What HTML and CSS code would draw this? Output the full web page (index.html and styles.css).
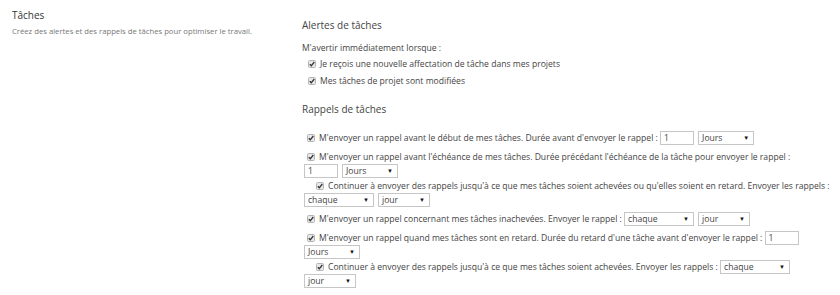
FILE: index.html
```html
<!DOCTYPE html>
<html>
<head>
    <meta charset="utf-8" />
    <title>Tâches</title>
    <link rel="stylesheet" href="styles.css">
</head>
<body>
    <div class="page">
        <div class="side">
            <div class="side-title">Tâches</div>
            <div class="side-desc">Créez des alertes et des rappels de tâches pour optimiser le travail.</div>
        </div>

        <div class="main">
            <h3 class="section-title">Alertes de tâches</h3>
            <div class="intro">M'avertir immédiatement lorsque :</div>
            <div class="opt"><span class="cb"><svg width="8" height="8" viewBox="0 0 8 8"><rect x="0.5" y="0.5" width="7" height="7" rx="1" fill="#e8e8e8" stroke="#b4b4b4"/><path d="M1.8 4.2 L3.3 5.8 L6.3 2" fill="none" stroke="#333" stroke-width="1.3"/></svg></span>Je reçois une nouvelle affectation de tâche dans mes projets</div>
            <div class="opt"><span class="cb"><svg width="8" height="8" viewBox="0 0 8 8"><rect x="0.5" y="0.5" width="7" height="7" rx="1" fill="#e8e8e8" stroke="#b4b4b4"/><path d="M1.8 4.2 L3.3 5.8 L6.3 2" fill="none" stroke="#333" stroke-width="1.3"/></svg></span>Mes tâches de projet sont modifiées</div>

            <h3 class="section-title reminders">Rappels de tâches</h3>

            <div class="item first">
                <span class="cb"><svg width="8" height="8" viewBox="0 0 8 8"><rect x="0.5" y="0.5" width="7" height="7" rx="1" fill="#e8e8e8" stroke="#b4b4b4"/><path d="M1.8 4.2 L3.3 5.8 L6.3 2" fill="none" stroke="#333" stroke-width="1.3"/></svg></span>M'envoyer un rappel avant le début de mes tâches. Durée avant d'envoyer le rappel :
                <input class="num" type="text" value="1"><span class="sel sel-jours">Jours<span class="arrow">▼</span></span>
            </div>

            <div class="item">
                <span class="cb"><svg width="8" height="8" viewBox="0 0 8 8"><rect x="0.5" y="0.5" width="7" height="7" rx="1" fill="#e8e8e8" stroke="#b4b4b4"/><path d="M1.8 4.2 L3.3 5.8 L6.3 2" fill="none" stroke="#333" stroke-width="1.3"/></svg></span>M'envoyer un rappel avant l'échéance de mes tâches. Durée précédant l'échéance de la tâche pour envoyer le rappel :<br>
                <input class="num" type="text" value="1"><span class="sel sel-jours">Jours<span class="arrow">▼</span></span>
            </div>

            <div class="item sub">
                <span class="cb"><svg width="8" height="8" viewBox="0 0 8 8"><rect x="0.5" y="0.5" width="7" height="7" rx="1" fill="#e8e8e8" stroke="#b4b4b4"/><path d="M1.8 4.2 L3.3 5.8 L6.3 2" fill="none" stroke="#333" stroke-width="1.3"/></svg></span>Continuer à envoyer des rappels jusqu'à ce que mes tâches soient achevées ou qu'elles soient en retard. Envoyer les rappels :<br>
                <span class="sel sel-chaque">chaque<span class="arrow">▼</span></span><span class="sel sel-jour">jour<span class="arrow">▼</span></span>
            </div>

            <div class="item">
                <span class="cb"><svg width="8" height="8" viewBox="0 0 8 8"><rect x="0.5" y="0.5" width="7" height="7" rx="1" fill="#e8e8e8" stroke="#b4b4b4"/><path d="M1.8 4.2 L3.3 5.8 L6.3 2" fill="none" stroke="#333" stroke-width="1.3"/></svg></span>M'envoyer un rappel concernant mes tâches inachevées. Envoyer le rappel :
                <span class="sel sel-chaque">chaque<span class="arrow">▼</span></span><span class="sel sel-jour">jour<span class="arrow">▼</span></span>
            </div>

            <div class="item">
                <span class="cb"><svg width="8" height="8" viewBox="0 0 8 8"><rect x="0.5" y="0.5" width="7" height="7" rx="1" fill="#e8e8e8" stroke="#b4b4b4"/><path d="M1.8 4.2 L3.3 5.8 L6.3 2" fill="none" stroke="#333" stroke-width="1.3"/></svg></span>M'envoyer un rappel quand mes tâches sont en retard. Durée du retard d'une tâche avant d'envoyer le rappel :
                <input class="num" type="text" value="1"><br>
                <span class="sel sel-jours">Jours<span class="arrow">▼</span></span>
            </div>

            <div class="item sub">
                <span class="cb"><svg width="8" height="8" viewBox="0 0 8 8"><rect x="0.5" y="0.5" width="7" height="7" rx="1" fill="#e8e8e8" stroke="#b4b4b4"/><path d="M1.8 4.2 L3.3 5.8 L6.3 2" fill="none" stroke="#333" stroke-width="1.3"/></svg></span>Continuer à envoyer des rappels jusqu'à ce que mes tâches soient achevées. Envoyer les rappels :
                <span class="sel sel-chaque">chaque<span class="arrow">▼</span></span><br>
                <span class="sel sel-jour">jour<span class="arrow">▼</span></span>
            </div>
        </div>
    </div>
</body>
</html>
```

FILE: styles.css
```css
body {
  margin: 0;
  background: #fff;
  font-family: "Open Sans", "Liberation Sans", sans-serif;
  color: #444;
}

.page {
  display: flex;
}

.side {
  width: 290px;
  padding: 9px 0 0 12px;
}

.side-title {
  font-size: 10px;
  line-height: 12px;
  color: #333;
}

.side-desc {
  margin-top: 5px;
  font-size: 7.7px;
  line-height: 11px;
  color: #777;
}

.main {
  padding-top: 18px;
  font-size: 8.6px;
}

.section-title {
  margin: 0;
  font-size: 10px;
  line-height: 14px;
  font-weight: normal;
  color: #444;
}

.section-title.reminders {
  margin-top: 12px;
}

.intro {
  margin-top: 8px;
  line-height: 16px;
}

.opt {
  line-height: 17px;
  padding-left: 6px;
  white-space: nowrap;
}

.cb {
  display: inline-block;
  width: 8px;
  height: 8px;
  margin-right: 4px;
  vertical-align: -1px;
}

.cb svg {
  display: block;
}

.item {
  margin-top: 5px;
  line-height: 14px;
  white-space: nowrap;
  padding-left: 2px;
}

.item > .cb {
  margin-left: 3px;
}

.item.first {
  margin-top: 15px;
}

.item.sub {
  margin-top: 1px;
}

.item.sub > .cb {
  margin-left: 12px;
}

.num {
  box-sizing: border-box;
  width: 34px;
  height: 14px;
  margin: 0 4px 0 0;
  padding: 0 3px;
  border: 1px solid #c6c6c6;
  font-family: inherit;
  font-size: 8.6px;
  color: #444;
  vertical-align: top;
}

.sel {
  display: inline-flex;
  box-sizing: border-box;
  align-items: center;
  justify-content: space-between;
  height: 14px;
  margin-right: 4px;
  padding: 0 4px 0 3px;
  border: 1px solid #c6c6c6;
  line-height: 12px;
  vertical-align: top;
}

.sel-jours {
  width: 56px;
}

.sel-chaque {
  width: 70px;
}

.sel-jour {
  width: 52px;
}

.arrow {
  font-size: 6px;
  color: #111;
}
```
